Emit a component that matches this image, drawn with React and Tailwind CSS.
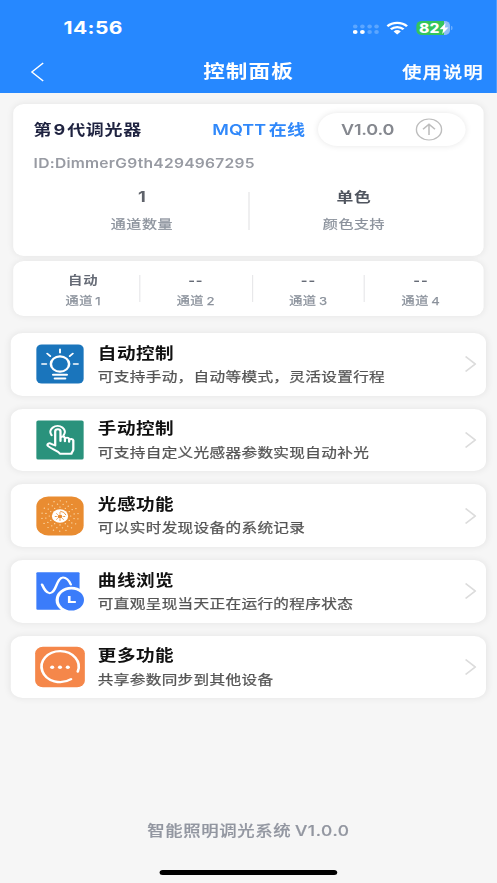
const channels = [
  { value: "自动", label: "通道1" },
  { value: "--", label: "通道2" },
  { value: "--", label: "通道3" },
  { value: "--", label: "通道4" },
];

function BulbIcon() {
  return (
    <svg width="40" height="40" viewBox="0 0 40 40" fill="none">
      <rect x="0.3" y="0.5" width="39.4" height="39" rx="4.5" fill="#1a75bc" />
      <g stroke="#fff" strokeLinecap="round">
        <circle cx="20" cy="20" r="7.6" strokeWidth="2.1" />
        <path
          d="M20 5.3v3.4M9.3 9.5l2.6 2.6M30.7 9.5 28.1 12.100M5 20h3.600M31.400 20H35"
          strokeWidth="1.600"
        />
        <path d="M14.300 30.700h11.400M15.700 34.600h8.600" strokeWidth="2" />
      </g>
    </svg>
  );
}

function TouchIcon() {
  return (
    <svg width="40" height="40" viewBox="0 0 40 40" fill="none">
      <rect x="0.3" y="0.5" width="39.4" height="39" rx="1.5" fill="#2a927c" />
      <g
        stroke="#fff"
        strokeWidth="1.900"
        strokeLinecap="round"
        strokeLinejoin="round"
      >
        <path d="M13 15.300a6 6 0 1 1 10 0" />
        <path d="M16 25.500V11.500a2.200 2.200 0 0 1 4.400 0V21v-3a1.900 1.900 0 0 1 3.700 0v3.300-2.300a1.800 1.800 0 0 1 3.500 0v2.700-1.500a1.800 1.800 0 0 1 3.500.3V29.500c0 2-1.500 2.600-1.500 4.300H20c-2-3.500-7-4.300-10-7.800-1.400-1.700.9-3.400 2.600-2.200z" />
      </g>
    </svg>
  );
}

const rings = [
  { r: 8.9, count: 12 },
  { r: 12, count: 16 },
  { r: 15.2, count: 18 },
];

function SensorIcon() {
  return (
    <svg width="40" height="40" viewBox="0 0 40 40" fill="none">
      <rect x="0.3" y="0.5" width="39.4" height="39" rx="10" fill="#e98c31" />
      {rings.map(({ r, count }) =>
        Array.from({ length: count }, (_, i) => {
          const a = (i / count) * Math.PI * 2 + r;
          return (
            <circle
              key={`${r}-${i}`}
              cx={20 + Math.cos(a) * r}
              cy={20 + Math.sin(a) * r}
              r="0.6"
              fill="#fbd9a8"
            />
          );
        })
      )}
      <circle cx="20" cy="20" r="6.8" fill="#fff" />
      <circle cx="20" cy="20.500" r="1.900" fill="#e98c31" />
      <path
        d="M20 16.500v1M20 23.500v1M16 20.500h1M23 20.500h1M17.200 17.700l.7.7M22.100 22.600l.7.7M17.200 23.300l.7-.7M20.500 15.300a5.200 5.200 0 0 1 4.400 3.500"
        stroke="#e98c31"
        strokeWidth="0.800"
        strokeLinecap="round"
      />
    </svg>
  );
}

function CurveIcon() {
  return (
    <svg width="40" height="40" viewBox="0 0 40 40" fill="none">
      <rect x="0.3" y="1.3" width="36" height="37.500" rx="1" fill="#3b7cfa" />
      <path
        d="M5 13.500c2 5 3.500 8.700 6.500 8.700 5.500 0 5.500-15.700 11-15.700 3.200 0 5 3 6.500 7"
        stroke="#fff"
        strokeWidth="2.100"
        strokeLinecap="round"
      />
      <circle cx="29.500" cy="29" r="13.200" fill="#fff" />
      <circle cx="29.500" cy="29" r="10.500" fill="#3b7cfa" />
      <path d="M27.700 25v6h5.500" stroke="#fff" strokeWidth="2.200" />
    </svg>
  );
}

function MoreIcon() {
  return (
    <svg width="42" height="42" viewBox="0 0 42 42" fill="none">
      <rect x="0.3" y="0.8" width="41.400" height="40.400" rx="6.500" fill="#f5874a" />
      <path
        d="M30.200 33.200A15.500 15.500 0 1 1 35.800 25.600"
        stroke="#fff"
        strokeWidth="2.200"
        strokeLinecap="round"
      />
      <g fill="#fff">
        <circle cx="14.500" cy="21.200" r="1.700" />
        <circle cx="21" cy="21.200" r="1.700" />
        <circle cx="27.500" cy="21.200" r="1.700" />
      </g>
    </svg>
  );
}

const menu = [
  { icon: BulbIcon, title: "自动控制", desc: "可支持手动，自动等模式，灵活设置行程" },
  { icon: TouchIcon, title: "手动控制", desc: "可支持自定义光感器参数实现自动补光" },
  { icon: SensorIcon, title: "光感功能", desc: "可以实时发现设备的系统记录" },
  { icon: CurveIcon, title: "曲线浏览", desc: "可直观呈现当天正在运行的程序状态" },
  { icon: MoreIcon, title: "更多功能", desc: "共享参数同步到其他设备" },
];

function StatusBar() {
  return (
    <div className="flex h-[56px] items-center pl-[53px] pr-[37px]">
      <span className="text-[17.500px] leading-none font-bold tracking-[0.3px]">14:56</span>
      <div className="ml-auto flex items-center">
        <svg width="22" height="12" viewBox="0 0 22 12" fill="#fff" className="mt-1">
          <g opacity="0.25">
            <circle cx="2" cy="2.500" r="1.900" />
            <circle cx="8" cy="2.500" r="1.900" />
            <circle cx="14" cy="2.500" r="1.900" />
            <circle cx="19.800" cy="2.500" r="1.900" />
            <circle cx="14" cy="8" r="1.900" />
            <circle cx="19.800" cy="8" r="1.900" />
          </g>
          <circle cx="2" cy="8" r="2" />
          <circle cx="8" cy="8" r="2" />
        </svg>
        <svg width="18" height="14" viewBox="0 0 18 14" fill="none" className="ml-[6.500px]">
          <g stroke="#fff" strokeWidth="2.200">
            <path d="M.8 5.200a11.600 11.600 0 0 1 16.400 0" />
            <path d="M3.700 8.300a7.500 7.500 0 0 1 10.600 0" />
          </g>
          <path d="M9 13.500 6 10.500a4.300 4.300 0 0 1 6 0z" fill="#fff" />
        </svg>
        <div className="ml-[7px] flex h-[14px] w-[27.500px] items-center rounded-[4.500px] bg-linear-to-r from-[#34c55c] from-83% to-[#8fbdf8] to-83% pl-[2px]">
          <span className="text-[13px] leading-none font-extrabold">82</span>
          <svg width="8" height="11" viewBox="0 0 8 11" fill="#fff">
            <path d="M5.300 0 .3 6.200h3L2.500 11l5.200-6.500h-3z" />
          </svg>
        </div>
        <div className="ml-px h-[4px] w-[1.500px] rounded-r-full bg-white/40" />
      </div>
    </div>
  );
}

function Header() {
  return (
    <header className="h-[93px] bg-[#2688ff] text-white">
      <StatusBar />
      <div className="flex h-[32px] items-center justify-between pl-[25px] pr-[11px]">
        <div className="w-[68px]">
          <svg width="12" height="20" viewBox="0 0 12 20" fill="none">
            <path d="M11 1 1.500 10 11 19" stroke="#fff" strokeWidth="1.200" />
          </svg>
        </div>
        <h1 className="mr-[14px] text-[18px] leading-none font-bold tracking-[0.900px]">
          控制面板
        </h1>
        <span className="text-[16px] leading-none font-medium tracking-[1px] [-webkit-text-stroke:0.25px]">
          使用说明
        </span>
      </div>
    </header>
  );
}

function DeviceCard() {
  return (
    <section className="mx-[11px] mt-[11px] h-[152px] rounded-[9px] bg-white pl-[17px] pr-[15px] pt-[9px] shadow-[0_0_7px_rgba(0,0,0,0.08)]">
      <div className="flex h-[33px] items-center">
        <h2 className="text-[15px] leading-none font-bold tracking-[0.6px] text-[#1f2340]">
          第<span className="mx-[1px]">9</span>代调光器
        </h2>
        <span className="ml-auto text-[15px] leading-none font-semibold tracking-[0.1px] text-[#3088fa]">
          MQTT<span className="ml-[2px]">在线</span>
        </span>
        <div className="ml-[11px] flex h-[33px] w-[123px] items-center justify-between rounded-full bg-white pl-[19px] pr-[19px] shadow-[0_0_6px_rgba(0,0,0,0.1)]">
          <span className="text-[15px] leading-none font-semibold tracking-[-0.2px] text-[#85888f]">
            V1.0.0
          </span>
          <svg width="23" height="23" viewBox="0 0 23 23" fill="none" stroke="#bdbdbd">
            <circle cx="11.500" cy="11.500" r="10.500" strokeWidth="1.200" />
            <path d="M11.500 17V6.500M6.500 11.200l5-5 5 5" strokeWidth="1.300" />
          </svg>
        </div>
      </div>
      <p className="mt-[9.500px] text-[13px] leading-[14px] font-semibold tracking-[0.210px] text-[#989ba3]">
        ID:DimmerG9th4294967295
      </p>
      <div className="mt-[20.500px] flex pr-[2px]">
        <div className="flex w-[179px] flex-col items-center gap-[14px] pl-[1.500px] leading-[14px]">
          <span className="text-[15px] font-bold text-[#5f636b]">1</span>
          <span className="text-[12.500px] tracking-[0.5px] text-[#8b929c] [-webkit-text-stroke:0.25px]">
            通道数量
          </span>
        </div>
        <div className="mt-[2px] h-[38px] w-px bg-[#e4e4e6]" />
        <div className="flex w-[174px] flex-col items-center gap-[14px] leading-[14px]">
          <span className="text-[14px] font-bold tracking-[0.6px] text-[#50555f]">单色</span>
          <span className="text-[12.500px] tracking-[0.5px] text-[#8b929c] [-webkit-text-stroke:0.25px]">
            颜色支持
          </span>
        </div>
      </div>
    </section>
  );
}

function ChannelStrip() {
  return (
    <section className="mx-[11px] mt-[5px] grid h-[55px] grid-cols-[repeat(4,93.800px)] items-center rounded-[9px] bg-white pl-[12px] shadow-[0_0_7px_rgba(0,0,0,0.08)]">
      {channels.map((c, i) => (
        <div key={c.label} className="flex items-center">
          <div className="flex flex-1 flex-col items-center gap-[8px] pt-[4px]">
            <span className="text-[12px] leading-[12px] font-bold tracking-[0.8px] text-[#666b76]">
              {c.value}
            </span>
            <span className="text-[11px] leading-[12px] tracking-[0.4px] text-[#8b929c] [-webkit-text-stroke:0.25px]">
              {c.label.slice(0, 2)}
              <span className="ml-[2px]">{c.label.slice(2)}</span>
            </span>
          </div>
          <div className={i < 3 ? "h-[27px] w-px bg-[#e8e8ea]" : "w-px"} />
        </div>
      ))}
    </section>
  );
}

function MenuCard({ icon: Icon, title, desc }) {
  return (
    <button className="flex h-[62.700px] w-full items-center rounded-[10px] bg-white pl-[19.500px] pr-[8px] text-left shadow-[0_0_7px_rgba(0,0,0,0.08)]">
      <span className="flex w-[42px] shrink-0 justify-center">
        <Icon />
      </span>
      <span className="ml-[11px] flex flex-col gap-[6.500px] pt-[1px]">
        <span className="text-[15.500px] leading-[16px] font-bold tracking-[0.4px] text-[#111]">
          {title}
        </span>
        <span className="text-[13px] leading-[16px] tracking-[0.3px] whitespace-nowrap text-[#555] [-webkit-text-stroke:0.25px]">
          {desc}
        </span>
      </span>
      <svg width="10" height="18" viewBox="0 0 10 18" fill="none" className="ml-auto shrink-0">
        <path d="M1 1.500 9 9 1 16.500" stroke="#dcdcdc" strokeWidth="1.600" />
      </svg>
    </button>
  );
}

export default function App() {
  return (
    <div className="h-[883px] w-[497px] overflow-hidden bg-[#f6f6f6]">
      {/* phone width is 414 logical px, widened to fill the window */}
      <div className="flex h-[883px] w-[414.200px] origin-top-left scale-x-[1.2] flex-col font-['Inter','Noto_Sans_CJK_SC',sans-serif]">
        <Header />
        <DeviceCard />
        <ChannelStrip />
        <div className="mr-[9.500px] ml-[9px] mt-[17px] flex flex-col gap-[13px]">
          {menu.map((item) => (
            <MenuCard key={item.title} {...item} />
          ))}
        </div>
        <footer className="mt-auto flex flex-col items-center">
          <p className="text-[14.500px] leading-[16px] font-medium tracking-[0.5px] text-[#9296a0] [-webkit-text-stroke:0.2px]">
            智能照明调光系统<span className="ml-[3px]">V1.0.0</span>
          </p>
          <div className="mt-[31px] mb-[8px] h-[5px] w-[148px] rounded-full bg-black" />
        </footer>
      </div>
    </div>
  );
}
